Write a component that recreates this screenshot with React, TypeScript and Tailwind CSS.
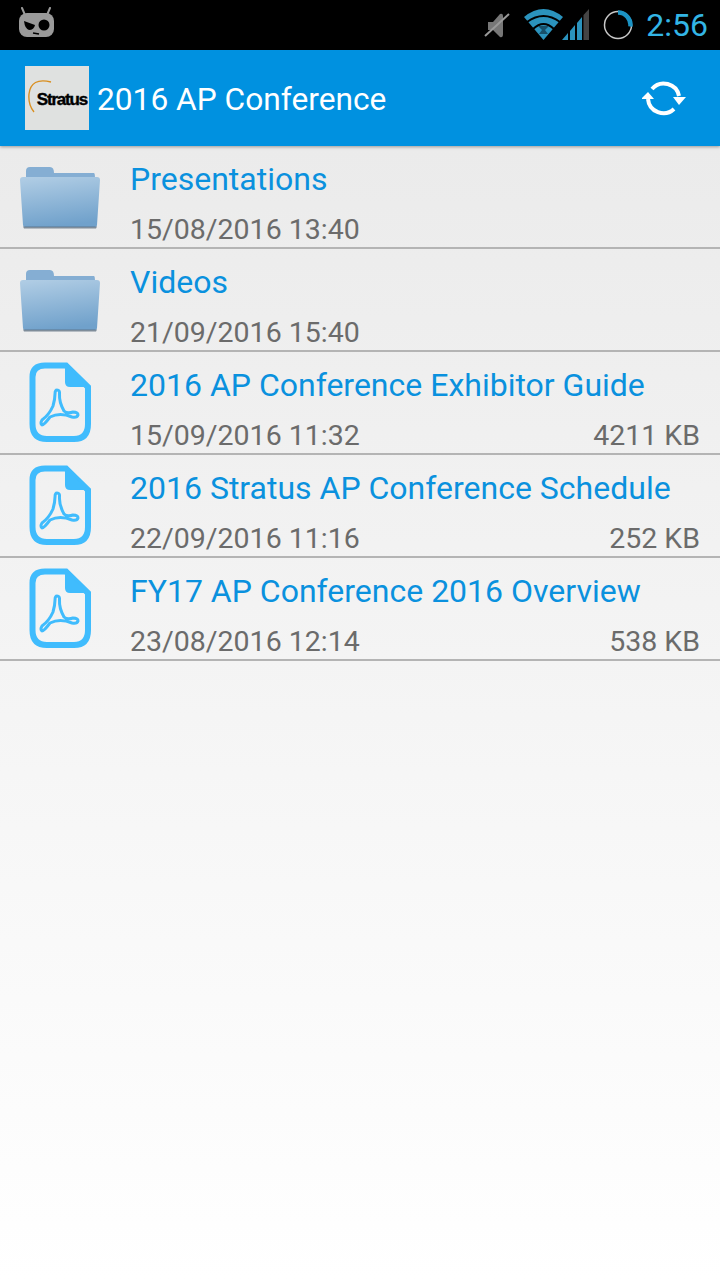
import { ReactNode } from "react";

type Entry = {
  name: string;
  date: string;
  size?: string;
  kind: "folder" | "pdf";
};

const entries: Entry[] = [
  { name: "Presentations", date: "15/08/2016 13:40", kind: "folder" },
  { name: "Videos", date: "21/09/2016 15:40", kind: "folder" },
  { name: "2016 AP Conference Exhibitor Guide", date: "15/09/2016 11:32", size: "4211 KB", kind: "pdf" },
  { name: "2016 Stratus AP Conference Schedule", date: "22/09/2016 11:16", size: "252 KB", kind: "pdf" },
  { name: "FY17 AP Conference 2016 Overview", date: "23/08/2016 12:14", size: "538 KB", kind: "pdf" },
];

function CyanogenMascot() {
  return (
    <svg width="38" height="30" viewBox="0 0 38 30" className="mb-[6px] ml-[18px]">
      <path d="M4 1 L7 8 M32 1 L29 8" stroke="#9a9a9a" strokeWidth="2" strokeLinecap="round" />
      <rect x="1" y="6" width="35" height="24" rx="8" fill="#9a9a9a" />
      <path d="M6 14 L17 18 Q16 23 11 23 Q7 22 6 14Z" fill="#000" />
      <circle cx="26" cy="18" r="5.5" fill="#000" />
      <path d="M15 26 L21 27" stroke="#000" strokeWidth="1.5" />
    </svg>
  );
}

function MuteIcon() {
  return (
    <svg width="26" height="30" viewBox="0 0 26 30">
      <path d="M4 12 L9 12 L16 4 Q19 3 19 6 L19 24 Q19 28 16 27 L9 20 L4 20 Z" fill="#777" />
      <path d="M1 26 L25 4" stroke="#999" strokeWidth="2" />
    </svg>
  );
}

function WifiIcon() {
  return (
    <svg width="40" height="32" viewBox="0 0 40 32">
      <path d="M0 8 Q19.5 -8 39 8 L19.5 31 Z" fill="#2b93bd" />
      <path d="M3 13 Q19.5 1 36 13" fill="none" stroke="#000" strokeWidth="2" />
      <path d="M9 20 Q19.5 10 30 20" fill="none" stroke="#000" strokeWidth="2" />
      <path d="M14 17 L25 17 L21 21 L24 25 L15 25 L18 21 Z" fill="#17506a" />
    </svg>
  );
}

function SignalIcon() {
  return (
    <svg width="28" height="32" viewBox="0 0 28 32" className="-ml-[3px]">
      <path d="M1 31 L7 24 L7 31 Z" fill="#2b93bd" />
      <path d="M9 22 L14 16 L14 31 L9 31 Z" fill="#2b93bd" />
      <path d="M16 14 L21 8 L21 31 L16 31 Z" fill="#2b93bd" />
      <path d="M22.5 6 L28 0 L28 31 L22.5 31 Z" fill="#444" />
    </svg>
  );
}

function BatteryRing() {
  return (
    <svg width="30" height="30" viewBox="0 0 30 30">
      <circle cx="15" cy="15" r="13.5" fill="none" stroke="#c8c8c8" strokeWidth="1.5" />
      <path d="M15 2.5 A12.5 12.5 0 0 1 27.4 16.5" fill="none" stroke="#1b93c4" strokeWidth="4.5" />
    </svg>
  );
}

function SyncIcon() {
  return (
    <svg width="44" height="38" viewBox="0 0 44 38">
      <path d="M10 10 A15.5 15.5 0 0 1 37 17" fill="none" stroke="#fff" strokeWidth="4" />
      <path d="M32 30 A15.5 15.5 0 0 1 6 20" fill="none" stroke="#fff" strokeWidth="4" />
      <path d="M31 18 L44 18 L37 26 Z" fill="#fff" />
      <path d="M-1 20 L12 20 L6 13 Z" fill="#fff" />
    </svg>
  );
}

function StratusLogo() {
  return (
    <div className="relative flex h-16 w-16 shrink-0 items-center justify-end overflow-hidden bg-[#dfe1e0]">
      <svg width="26" height="36" viewBox="0 0 26 36" className="absolute left-[2px] top-[14px]">
        <path d="M24 2 Q4 -3 2 14 Q1 25 7 32" fill="none" stroke="#d98f20" strokeWidth="1.4" />
      </svg>
      <span className="relative mr-[2px] mt-[2px] font-['Liberation_Sans',sans-serif] text-[17px] font-bold leading-none tracking-[-1.2px] text-black [-webkit-text-stroke:0.4px_black]">
        Stratus
      </span>
    </div>
  );
}

function FolderIcon() {
  return (
    <svg width="80" height="62" viewBox="0 0 80 62" className="mt-[3px]">
      <defs>
        <linearGradient id="folderFront" x1="0.2" y1="0" x2="0.4" y2="1">
          <stop offset="0" stopColor="#afcce4" />
          <stop offset="1" stopColor="#70a1cb" />
        </linearGradient>
      </defs>
      <path d="M6 12 L6 4 Q6 0 10 0 L30 0 Q34 0 34 6 L74 6 Q75 6 75 12 Z" fill="#85aed3" />
      <path d="M0 13 Q0 10 3 10 L77 10 Q80 10 80 13 L77 58 Q77 60 75 60 L5 60 Q3 60 3 58 Z" fill="url(#folderFront)" />
      <path d="M3 59.5 L77 59.5 L76 61.5 L4 61.5 Z" fill="#5a6c7d" opacity="0.75" />
    </svg>
  );
}

function PdfIcon() {
  return (
    <svg width="62" height="80" viewBox="0 0 62 80" className="mb-[1px]">
      <path
        d="M16 3.5 L37 3.5 L59 25 L59 62 Q59 77 45 77 L18 77 Q3.5 77 3.5 62 L3.5 15 Q3.5 3.5 16 3.5 Z"
        fill="none"
        stroke="#40bcfd"
        strokeWidth="6"
      />
      <path d="M36 3 L59 25 L41 25 Q36 25 36 20 Z" fill="#40bcfd" />
      <path
        d="M26 32 Q26 28 28 28 Q31 28 30.5 32 Q30 40 35 49 Q38 52 44 50 Q49 50 49 53 Q48 56 43 55 Q31 50 21 55 Q15 63 13 63 Q11 61 13 58 Q20 53 24 44 Q26 37 26 32 Z"
        fill="none"
        stroke="#40bcfd"
        strokeWidth="3"
        strokeLinejoin="round"
      />
    </svg>
  );
}

function Row({ icon, entry }: { icon: ReactNode; entry: Entry }) {
  return (
    <div className="flex h-[103px] border-b-2 border-[#b4b4b4]">
      <div className="flex w-[120px] shrink-0 items-center justify-center">{icon}</div>
      <div className="flex min-w-0 flex-1 flex-col pl-[10px] pr-5">
        <div className="mt-[13px] h-[40px] whitespace-nowrap text-[32px] leading-[40px] text-[#0a91de]">
          {entry.name}
        </div>
        <div className="mt-[13px] flex justify-between text-[28.5px] leading-[36px] text-[#6b6b6b]">
          <span>{entry.date}</span>
          {entry.size && <span>{entry.size}</span>}
        </div>
      </div>
    </div>
  );
}

export default function App() {
  return (
    <div className="flex h-[1280px] w-[720px] flex-col overflow-hidden bg-white font-['Roboto',sans-serif]">
      {/* Status bar */}
      <div className="flex h-[50px] shrink-0 items-center justify-between bg-black">
        <CyanogenMascot />
        <div className="flex items-center">
          <MuteIcon />
          <div className="ml-[14px] flex items-end">
            <WifiIcon />
            <SignalIcon />
          </div>
          <div className="ml-[14px]">
            <BatteryRing />
          </div>
          <span className="ml-[13px] mr-[12px] text-[32px] leading-none text-[#33b5e5]">2:56</span>
        </div>
      </div>

      {/* Action bar */}
      <div className="z-10 flex h-[96px] shrink-0 items-center bg-[#0091e0] pl-[25px] pr-[34px] shadow-[0_1px_3px_rgba(0,0,0,0.35)]">
        <StratusLogo />
        <span className="ml-[8px] mt-[4px] flex-1 text-[31.7px] text-white">2016 AP Conference</span>
        <SyncIcon />
      </div>

      {/* Files */}
      <div className="flex-1 bg-gradient-to-b from-[#ebebeb] to-white">
        {entries.map((entry) => (
          <Row key={entry.name} entry={entry} icon={entry.kind === "folder" ? <FolderIcon /> : <PdfIcon />} />
        ))}
      </div>
    </div>
  );
}
